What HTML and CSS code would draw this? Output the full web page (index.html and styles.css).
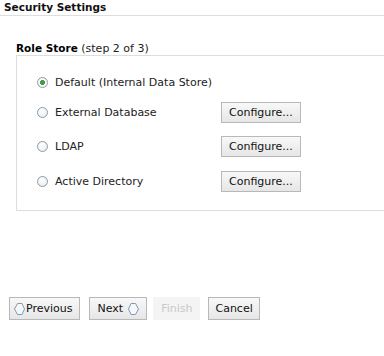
FILE: index.html
```html
<!DOCTYPE html>
<html lang="en">
<head>
  <meta charset="UTF-8" />
  <title>Security Settings</title>
  <link rel="stylesheet" href="styles.css">
</head>
<body>
<div class="page">
  <h1 class="title">Security Settings</h1>

  <div class="legend"><b>Role Store</b> (step 2 of 3)</div>
  <div class="store">
    <div class="opt">
      <label><input type="radio" name="store" checked> Default (Internal Data Store)</label>
    </div>
    <div class="opt">
      <label><input type="radio" name="store"> External Database</label>
      <button class="btn">Configure...</button>
    </div>
    <div class="opt">
      <label><input type="radio" name="store"> LDAP</label>
      <button class="btn">Configure...</button>
    </div>
    <div class="opt">
      <label><input type="radio" name="store"> Active Directory</label>
      <button class="btn">Configure...</button>
    </div>
  </div>

  <div class="actions">
    <button class="btn nav prev">
      <svg width="11" height="12" viewBox="0 0 11 12"><polygon points="3.5,0.5 8,0.5 10.5,6 8,11.5 3.5,11.5 0.5,6" fill="#f4f8fb" stroke="#7f9ab4"/></svg>Previous
    </button>
    <button class="btn nav next">Next
      <svg width="11" height="12" viewBox="0 0 11 12"><polygon points="3,0.5 7.5,0.5 10.5,6 7.5,11.5 3,11.5 0.5,6" fill="#f4f8fb" stroke="#7f9ab4"/></svg>
    </button>
    <button class="btn nav finish" disabled>Finish</button>
    <button class="btn nav cancel">Cancel</button>
  </div>
</div>
</body>
</html>
```

FILE: styles.css
```css
html, body {
  margin: 0;
  padding: 0;
  background: #fff;
  font-family: "DejaVu Sans", Verdana, sans-serif;
  font-size: 11px;
  color: #222;
  overflow: hidden;
}

.page {
  width: 384px;
  height: 356px;
}

.title {
  margin: 0;
  padding: 1px 4px 0;
  height: 14px;
  font-size: 10.5px;
  font-weight: bold;
  color: #111;
  border-bottom: 1px solid #ddd;
}

.legend {
  margin: 26px 0 0 16px;
  line-height: 12px;
  color: #222;
}

.legend b {
  font-size: 10.5px;
  color: #000;
}

.store {
  margin: 0 0 0 16px;
  padding: 15px 0 18px 18px;
  border: 1px solid #ddd;
  border-right: none;
}

.opt {
  display: flex;
  align-items: center;
  height: 22px;
}

.opt + .opt {
  margin-top: 12px;
}

.opt:nth-child(2) {
  margin-top: 8px;
}

.opt:last-child {
  margin-top: 13px;
}

.opt label {
  display: flex;
  align-items: center;
  width: 186px;
}

.opt input {
  appearance: none;
  margin: 0 7px 0 2px;
  width: 11px;
  height: 11px;
  border: 1px solid #8d9aa6;
  border-radius: 50%;
  background: radial-gradient(circle at 40% 35%, #fff, #e4e8ec);
}

.opt input:checked {
  background: radial-gradient(circle, #3f9a4a 0 2.2px, #fff 2.8px, #e8ecef);
}

.btn {
  font-family: "DejaVu Sans", Verdana, sans-serif;
  font-size: 11px;
  color: #111;
  height: 21px;
  padding: 0 7px;
  border: 1px solid #b8b8b8;
  border-radius: 0;
  background: linear-gradient(#f8f8f8, #e6e6e6);
  display: inline-flex;
  align-items: center;
  gap: 2px;
}

.actions {
  display: flex;
  margin: 86px 0 0 9px;
}

.nav {
  height: 23px;
}

.prev {
  padding: 0 6px 0 4px;
  margin-right: 9px;
  gap: 1px;
}

.next {
  padding: 0 7px 0 8px;
  gap: 5px;
  margin-right: 6px;
}

.btn svg {
  display: block;
}

.finish {
  color: #c8c8c8;
  background: #f4f4f4;
  border-color: #f4f4f4;
  margin-right: 8px;
}

.cancel {
  padding: 0 6px;
}
```
